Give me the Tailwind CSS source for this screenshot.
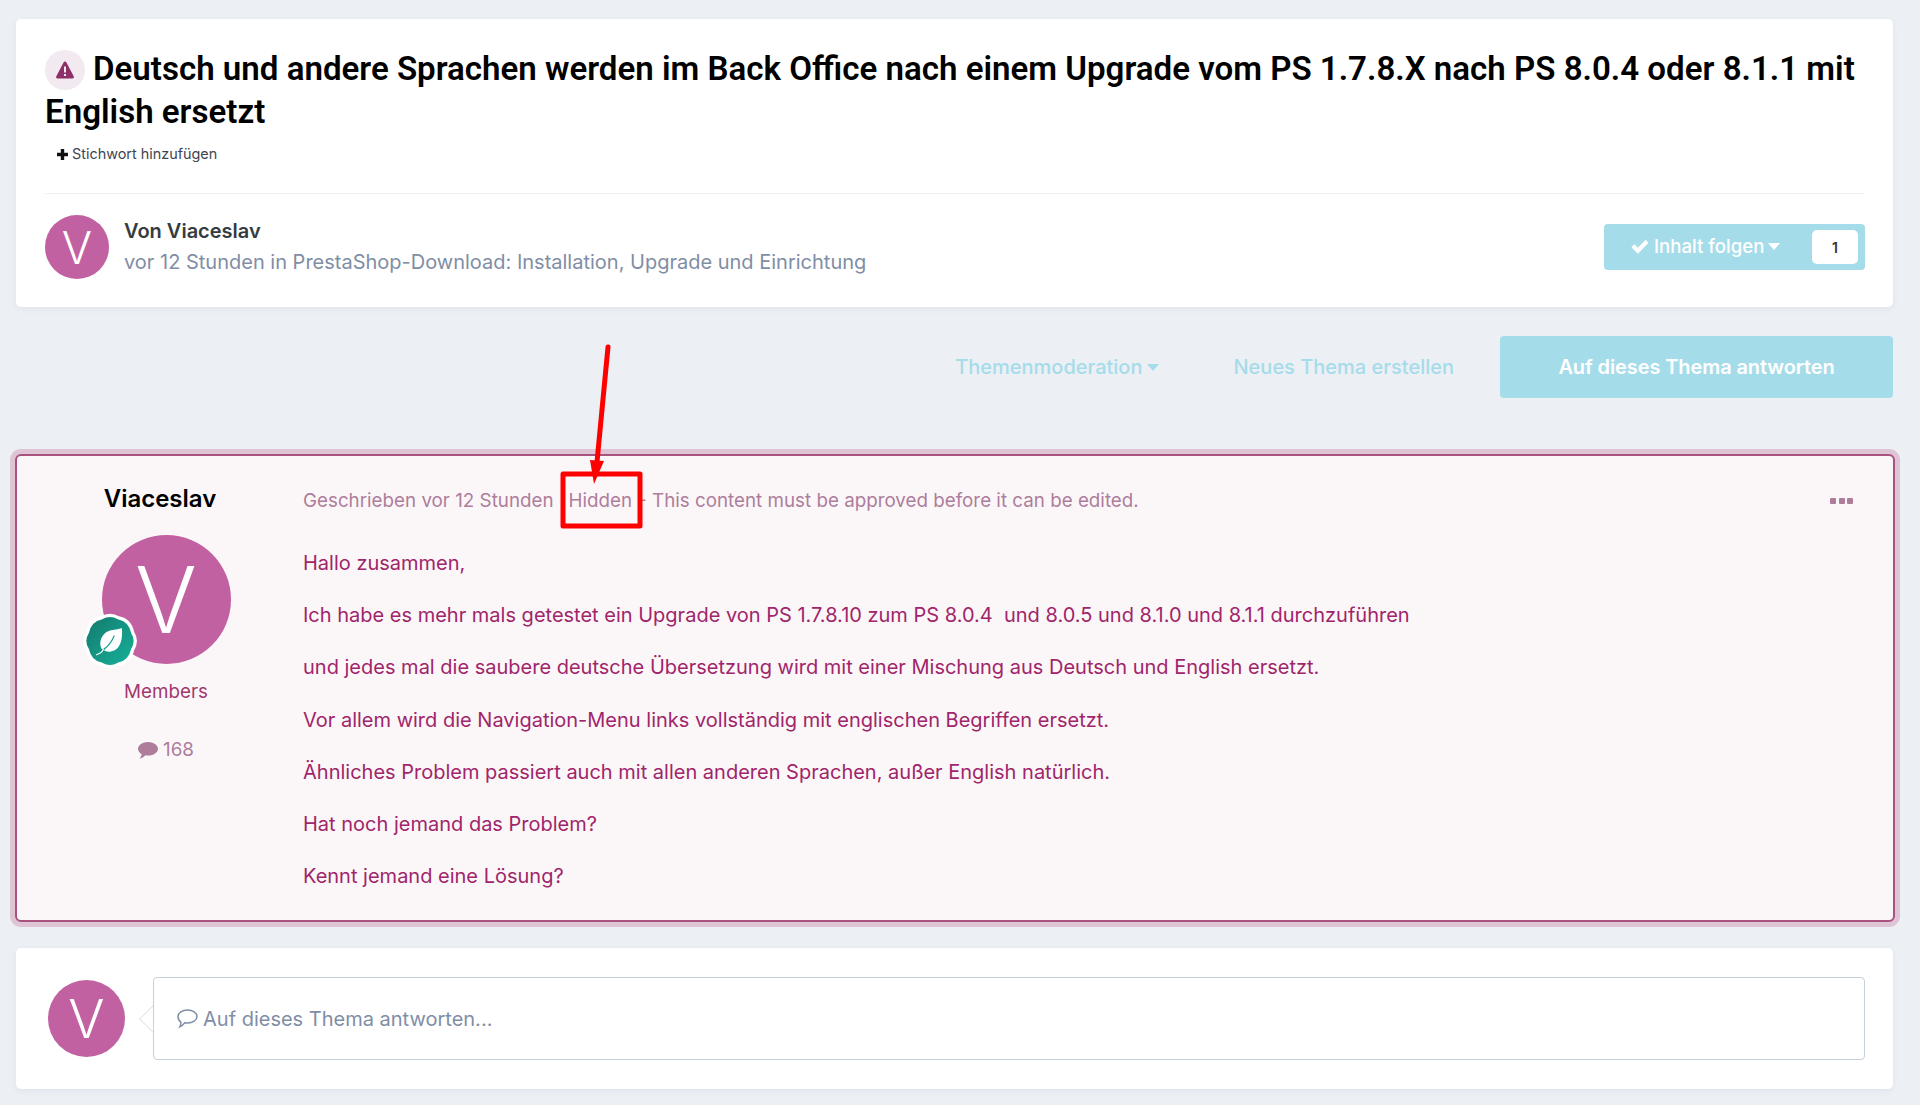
<!DOCTYPE html>
<html lang="de">
<head>
  <meta charset="UTF-8" />
  <title>Deutsch und andere Sprachen</title>
  <script src="https://cdn.jsdelivr.net/npm/@tailwindcss/browser@4"></script>
</head>
<body class="bg-[#ecf0f5] font-['Inter',sans-serif] text-[20px] h-[1105px] overflow-hidden relative">
  <div class="px-4 pt-[19px]">
    <!-- header card -->
    <section class="bg-white rounded-[5px] shadow-[0_2px_6px_rgba(30,50,80,0.06)] w-[1877px] h-[288px] px-[29px] pt-[29px]">
      <h1 class="font-['Roboto',sans-serif] text-[33.100px] leading-[42.500px] font-[650] text-black">
        <span class="inline-flex align-top w-[40px] h-[40px] rounded-full bg-[#f3e9f0] items-center justify-center mt-[2px] mr-[8px]">
          <svg class="w-[20px] h-[20px]" viewBox="0 0 20 20"><path fill="#8d2f68" d="M10 1.500c.5 0 1 .3 1.300.8l7.500 14.200c.5.900-.2 2-1.300 2H2.500c-1.100 0-1.800-1.100-1.300-2L8.700 2.300c.3-.5.800-.8 1.300-.8z"/><rect x="9" y="6.500" width="2" height="6" fill="#f3e9f0"/><rect x="9" y="14" width="2" height="2" fill="#f3e9f0"/></svg>
        </span>Deutsch und andere Sprachen werden im Back Office nach einem Upgrade vom PS 1.7.8.X nach PS 8.0.4 oder 8.1.1 mit English ersetzt
      </h1>
      <div class="flex items-center gap-[4px] ml-[12px] mt-[10px] text-[14.400px] leading-[22px] text-[#3d4650]">
        <svg class="w-[11px] h-[11px]" viewBox="0 0 11 11"><path fill="#111" d="M3.800 0h3.400v3.800H11v3.400H7.200V11H3.800V7.200H0V3.800h3.800z"/></svg>
        <span>Stichwort hinzufügen</span>
      </div>
      <div class="border-t border-[#eef0f3] mt-[28px] pt-[21px] flex items-center justify-between">
        <div class="flex items-center gap-[15px]">
          <div class="w-[64px] h-[64px] rounded-full bg-[#c261a1] text-white flex items-center justify-center text-[45px] font-light leading-none">V</div>
          <div class="-mt-[2px]">
            <div class="text-[20px] leading-[28px] font-semibold text-[#353c41]">Von Viaceslav</div>
            <div class="text-[20px] leading-[28px] mt-[3px] text-[#7f8ea5]">vor 12 Stunden in PrestaShop-Download: Installation, Upgrade und Einrichtung</div>
          </div>
        </div>
        <div class="-mr-px w-[261px] h-[46px] rounded-[4px] bg-[#a5dcea] flex items-center justify-between pl-[27px] pr-[7px] text-white">
          <div class="flex items-center gap-[5px] text-[18.600px] font-medium">
            <svg class="w-[18px] h-[15px]" viewBox="0 0 16 14"><path fill="#fff" d="M6 13.800 0 7.800l2.800-2.800L6 8.200 13.200.6 16 3.400z"/></svg>
            <span>Inhalt folgen</span>
            <span class="w-0 h-0 border-x-[6.500px] border-x-transparent border-t-[7px] border-t-white -ml-[1px]"></span>
          </div>
          <div class="w-[46px] h-[34px] rounded-[5px] bg-white text-[#333] text-[14px] font-semibold flex items-center justify-center">1</div>
        </div>
      </div>
    </section>

    <!-- action bar -->
    <div class="flex items-center justify-end w-[1877px] mt-[29px] h-[62px] text-[#a5dcea] font-medium">
      <span class="flex items-center gap-[5px]">Themenmoderation<span class="w-0 h-0 border-x-[6.500px] border-x-transparent border-t-[7px] border-t-[#a5dcea]"></span></span>
      <span class="ml-[74px]">Neues Thema erstellen</span>
      <button class="ml-[46px] w-[393px] h-[62px] rounded-[4px] bg-[#a5dcea] text-white font-semibold tracking-[-0.005em]">Auf dieses Thema antworten</button>
    </div>

    <!-- post -->
    <article class="-ml-px mt-[56px] w-[1880px] h-[468px] rounded-[6px] bg-[#fbf7f9] border-2 border-[#a8527f] shadow-[0_0_0_5px_#dec4d4] flex">
      <aside class="w-[286px] shrink-0 flex flex-col items-center text-center pl-[12px]">
        <div class="text-[24px] leading-[32px] font-semibold text-black mt-[27px] -ml-[12px]">Viaceslav</div>
        <div class="relative mt-[20px] w-[129px] h-[129px] rounded-full bg-[#c261a1] text-white flex items-center justify-center text-[92px] font-light leading-none">
          V
          <svg class="absolute left-[-20px] top-[78px] w-[56px] h-[56px]" viewBox="2 2 52 52">
            <defs><linearGradient id="badgeFill" x1="0" y1="0" x2="1" y2="1"><stop offset="0" stop-color="#14786c"/><stop offset="1" stop-color="#16b39b"/></linearGradient></defs>
            <path fill="url(#badgeFill)" stroke="#fff" stroke-width="3" stroke-linejoin="round" d="M20 6.500Q28 2 36 6.500Q46.500 8.500 49 20Q54 28 49 36Q46.500 47.500 36 49.500Q28 54 20 49.500Q9.500 47.500 7 36Q2 28 7 20Q9.500 8.500 20 6.500z"/>
            <path fill="#fff" d="M39 16c1 10-1 21-11 22-3 .3-6-1-8-3-2-5-1-10 3-14 5-4 11-3 16-5z"/>
            <path fill="none" stroke="#16a08d" stroke-width="1.200" d="M22 36c4-3 8-8 10-13"/>
            <path fill="none" stroke="#fff" stroke-width="1" d="M15 41c2-1 5-1 7-5"/>
          </svg>
        </div>
        <div class="mt-[15px] text-[18.800px] leading-[26px] text-[#a2386f]">Members</div>
        <div class="mt-[32px] text-[18.800px] leading-[26px] text-[#ae7d9b] flex items-center gap-[5px]">
          <svg class="w-[20px] h-[17px]" viewBox="0 0 20 17"><path fill="#ae7d9b" d="M10 0c5.500 0 10 3 10 6.800s-4.500 6.800-10 6.800c-1 0-1.800-.1-2.600-.3C5.800 15 3.500 16.500 1.500 16.500c1.200-1.200 2-2.700 2.100-4.300C1.400 11 0 9 0 6.800 0 3 4.500 0 10 0z"/></svg>
          168
        </div>
      </aside>
      <div class="flex-1 pr-[40px] pt-[32px]">
        <div class="flex items-center justify-between h-[26px] text-[18.800px] text-[#ae7d9b]">
          <div class="leading-[26px]"><span>Geschrieben vor 12 Stunden</span><span class="ml-[15px]">Hidden</span><span class="ml-[6px]">- This content must be approved before it can be edited.</span></div>
          <div class="flex gap-[2.500px] -mt-[1px]"><i class="w-[6px] h-[6px] rounded-[1px] bg-[#ae7d9b]"></i><i class="w-[6px] h-[6px] rounded-[1px] bg-[#ae7d9b]"></i><i class="w-[6px] h-[6px] rounded-[1px] bg-[#ae7d9b]"></i></div>
        </div>
        <div class="mt-[35px] flex flex-col gap-[24.200px] leading-[28px] text-[#a0256a]">
          <p>Hallo zusammen,</p>
          <p>Ich habe es mehr mals getestet ein Upgrade von PS 1.7.8.10 zum PS 8.0.4&nbsp; und 8.0.5 und 8.1.0 und 8.1.1 durchzuführen</p>
          <p>und jedes mal die saubere deutsche Übersetzung wird mit einer Mischung aus Deutsch und English ersetzt.</p>
          <p>Vor allem wird die Navigation-Menu links vollständig mit englischen Begriffen ersetzt.</p>
          <p>Ähnliches Problem passiert auch mit allen anderen Sprachen, außer English natürlich.</p>
          <p>Hat noch jemand das Problem?</p>
          <p>Kennt jemand eine Lösung?</p>
        </div>
      </div>
    </article>

    <!-- reply -->
    <section class="mt-[26px] w-[1877px] h-[141px] bg-white rounded-[5px] shadow-[0_2px_6px_rgba(30,50,80,0.06)] flex items-center pl-[32px] pr-[28px]">
      <div class="w-[77px] h-[77px] rounded-full bg-[#c261a1] text-white flex items-center justify-center text-[54px] font-light leading-none shrink-0">V</div>
      <div class="relative ml-[28px] flex-1 h-[83px] border border-[#c6d0dc] rounded-[4px] flex items-center pl-[23px] gap-[5px] text-[#7f8ea5]">
        <span class="absolute left-[-11px] top-[31px] w-[20px] h-[20px] rotate-45 bg-white border-l border-b border-[#d6dde6] [clip-path:polygon(0_0,0_100%,100%_100%)]"></span>
        <svg class="w-[21px] h-[19px]" viewBox="0 0 21 19"><path fill="none" stroke="#7f8ea5" stroke-width="1.500" d="M10.500 1C15.700 1 20 3.800 20 7.500S15.700 14 10.500 14c-1 0-1.900-.1-2.700-.3C6.400 15.800 4.500 17.300 2.800 17.800c.8-1.200 1.200-2.700 1.100-4.700C2.100 11.900 1 9.800 1 7.500 1 3.800 5.300 1 10.500 1z"/></svg>
        <span>Auf dieses Thema antworten...</span>
      </div>
    </section>
  </div>

  <!-- red annotation over the screenshot -->
  <svg class="absolute left-0 top-0 w-[1920px] h-[1105px] pointer-events-none" viewBox="0 0 1920 1105">
    <rect x="563" y="474" width="77" height="52" fill="none" stroke="#ff0000" stroke-width="5" stroke-linejoin="round"/>
    <path d="M608 347 597 462" stroke="#ff0000" stroke-width="5" stroke-linecap="round"/>
    <path d="M590 460 604 461 594 484z" fill="#ff0000"/>
  </svg>
</body>
</html>
